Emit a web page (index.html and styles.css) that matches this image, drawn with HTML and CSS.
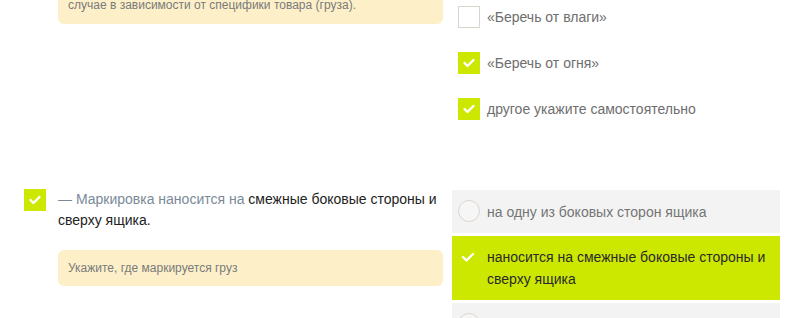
FILE: index.html
```html
<!DOCTYPE html>
<html lang="ru">
<head>
<meta charset="utf-8">
<title>Маркировка</title>
<link rel="stylesheet" href="styles.css">
</head>
<body>
<div class="page">
  <section class="row row-top">
    <div class="left">
      <div class="note">Маркировка груза выполняется в каждом конкретном<br>случае в зависимости от специфики товара (груза).</div>
    </div>
    <div class="right">
      <ul class="checklist">
        <li class="check-item"><span class="box"></span><span class="label">«Беречь от влаги»</span></li>
        <li class="check-item"><span class="box on"><svg viewBox="0 0 22 22"><polyline points="6.5,11 9.5,14 15.5,8"/></svg></span><span class="label">«Беречь от огня»</span></li>
        <li class="check-item"><span class="box on"><svg viewBox="0 0 22 22"><polyline points="6.5,11 9.5,14 15.5,8"/></svg></span><span class="label">другое укажите самостоятельно</span></li>
      </ul>
    </div>
  </section>

  <section class="row row-bottom">
    <div class="left">
      <div class="question">
        <span class="box on"><svg viewBox="0 0 22 22"><polyline points="6.5,11 9.5,14 15.5,8"/></svg></span>
        <p class="q-text"><span class="lead">— Маркировка наносится на</span> смежные боковые стороны и сверху ящика.</p>
      </div>
      <div class="note note-q">Укажите, где маркируется груз</div>
    </div>
    <div class="right">
      <ul class="options">
        <li class="option"><span class="radio"></span><span class="opt-text">на одну из боковых сторон ящика</span></li>
        <li class="option selected"><span class="tick"><svg viewBox="0 0 22 22"><polyline points="5,11 8.5,14.5 15,8"/></svg></span><span class="opt-text">наносится на смежные боковые стороны и сверху ящика</span></li>
        <li class="option"><span class="radio"></span><span class="opt-text">на верхнюю сторону ящика</span></li>
      </ul>
    </div>
  </section>
</div>
</body>
</html>
```

FILE: styles.css
```css
html, body {
  margin: 0;
  padding: 0;
  background: #ffffff;
  overflow: hidden;
}

body {
  font-family: "Liberation Sans", Arial, sans-serif;
  font-size: 14px;
  color: #222;
}

.page {
  width: 800px;
  margin-top: -32px;
}

.row {
  display: grid;
  grid-template-columns: 443px 328px;
  column-gap: 9px;
}

.left {
  padding-left: 24px;
}

.note {
  margin-left: 34px;
  background: #fdf0c9;
  border-radius: 6px;
  padding: 10px 10px;
  font-size: 12px;
  line-height: 18px;
  color: #7a7a7a;
}

.checklist {
  list-style: none;
  margin: 0;
  padding: 38px 0 0 6px;
}

.check-item {
  display: flex;
  align-items: center;
  gap: 7px;
  height: 22px;
  margin-bottom: 24px;
}

.label {
  color: #6e6e6e;
  line-height: 22px;
}

.box {
  flex: none;
  width: 22px;
  height: 22px;
  box-sizing: border-box;
  border: 1px solid #d9d4cc;
  background: #fff;
  display: flex;
}

.box.on {
  border: none;
  background: #cde800;
}

.box svg, .tick svg {
  width: 22px;
  height: 22px;
}

.box polyline, .tick polyline {
  fill: none;
  stroke: #fff;
  stroke-width: 2.4;
  stroke-linecap: round;
  stroke-linejoin: round;
}

.row-bottom {
  margin-top: 45px;
}

.question {
  display: flex;
  align-items: flex-start;
  gap: 12px;
}

.q-text {
  margin: 0;
  line-height: 21px;
  color: #222;
}

.lead {
  color: #7b8a99;
}

.note-q {
  margin-top: 19px;
  padding: 10px 10px;
  line-height: 16px;
}

.options {
  list-style: none;
  margin: 1px 0 0;
  padding: 0;
  display: flex;
  flex-direction: column;
  gap: 3px;
}

.option {
  display: flex;
  align-items: flex-start;
  gap: 7px;
  background: #f3f3f3;
  padding: 10px 8px 10px 6px;
  line-height: 22px;
  color: #757575;
}

.option .opt-text {
  padding-top: 1px;
}

.option.selected {
  background: #cde800;
  color: #2a2a2a;
  padding-top: 10px;
  padding-bottom: 10px;
}

.option.selected .opt-text {
  padding-top: 0;
}

.radio {
  flex: none;
  width: 22px;
  height: 22px;
  box-sizing: border-box;
  border: 1px solid #ddd6cc;
  border-radius: 50%;
  background: #f6f6f6;
}

.tick {
  flex: none;
  width: 22px;
  height: 22px;
  display: flex;
}
```
